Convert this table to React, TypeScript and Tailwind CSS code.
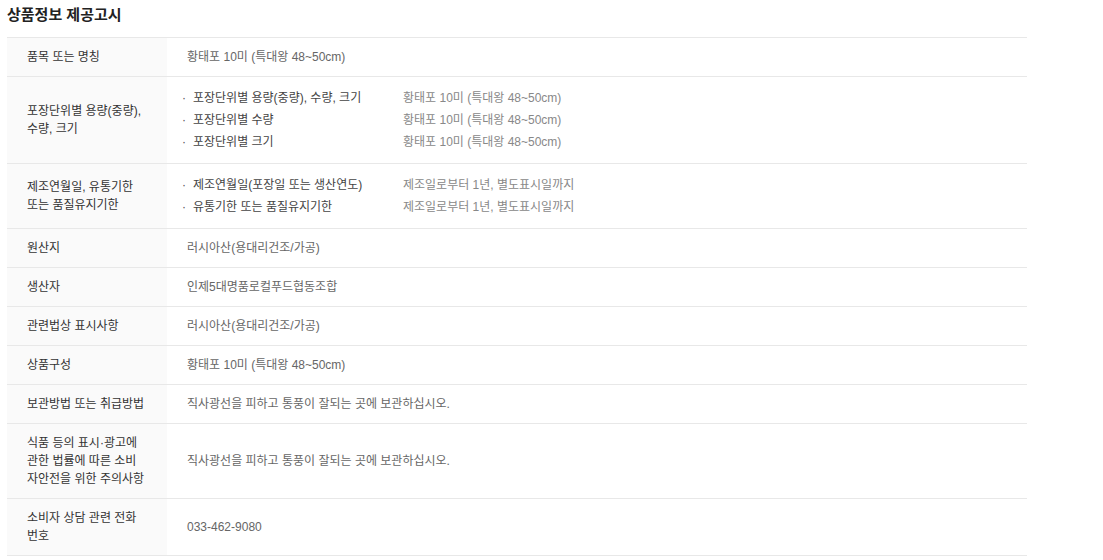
// label lines are split where the original cell wraps them
const rows: { label: string[]; value?: string; list?: [string, string][] }[] = [
  { label: ["품목 또는 명칭"], value: "황태포 10미 (특대왕 48~50cm)" },
  {
    label: ["포장단위별 용량(중량),", "수량, 크기"],
    list: [
      ["포장단위별 용량(중량), 수량, 크기", "황태포 10미 (특대왕 48~50cm)"],
      ["포장단위별 수량", "황태포 10미 (특대왕 48~50cm)"],
      ["포장단위별 크기", "황태포 10미 (특대왕 48~50cm)"],
    ],
  },
  {
    label: ["제조연월일, 유통기한", "또는 품질유지기한"],
    list: [
      ["제조연월일(포장일 또는 생산연도)", "제조일로부터 1년, 별도표시일까지"],
      ["유통기한 또는 품질유지기한", "제조일로부터 1년, 별도표시일까지"],
    ],
  },
  { label: ["원산지"], value: "러시아산(용대리건조/가공)" },
  { label: ["생산자"], value: "인제5대명품로컬푸드협동조합" },
  { label: ["관련법상 표시사항"], value: "러시아산(용대리건조/가공)" },
  { label: ["상품구성"], value: "황태포 10미 (특대왕 48~50cm)" },
  { label: ["보관방법 또는 취급방법"], value: "직사광선을 피하고 통풍이 잘되는 곳에 보관하십시오." },
  {
    label: ["식품 등의 표시·광고에", "관한 법률에 따른 소비", "자안전을 위한 주의사항"],
    value: "직사광선을 피하고 통풍이 잘되는 곳에 보관하십시오.",
  },
  { label: ["소비자 상담 관련 전화", "번호"], value: "033-462-9080" },
];

export default function App() {
  return (
    <div
      className="min-h-[560px] bg-white pl-[7px]"
      style={{ fontFamily: '"Liberation Sans", "Noto Sans CJK KR", sans-serif' }}
    >
      <h2 className="h-[37px] pt-[5px] text-[15px] font-bold leading-[20px] text-[#222]">
        상품정보 제공고시
      </h2>
      <div className="w-[1020px] border-t border-[#e8e8e8] text-[12px]">
        {rows.map((row) => (
          <div key={row.label.join()} className="grid grid-cols-[160px_1fr] border-b border-[#e8e8e8]">
            <div className="flex flex-col justify-center bg-[#fafafa] py-[10px] pl-[20px] leading-[18px] text-[#333]">
              {row.label.map((line) => (
                <span key={line} className="whitespace-nowrap">
                  {line}
                </span>
              ))}
            </div>
            <div className="flex items-center py-[10px] pl-[20px] pr-[20px]">
              {row.list ? (
                <ul className="-ml-[5px] leading-[22px]">
                  {row.list.map(([k, v]) => (
                    <li key={k} className="flex">
                      <span className="w-[11px] text-[#555]">·</span>
                      <span className="w-[210px] text-[#444]">{k}</span>
                      <span className="text-[#888]">{v}</span>
                    </li>
                  ))}
                </ul>
              ) : (
                <span className="leading-[18px] text-[#666]">{row.value}</span>
              )}
            </div>
          </div>
        ))}
      </div>
    </div>
  );
}
